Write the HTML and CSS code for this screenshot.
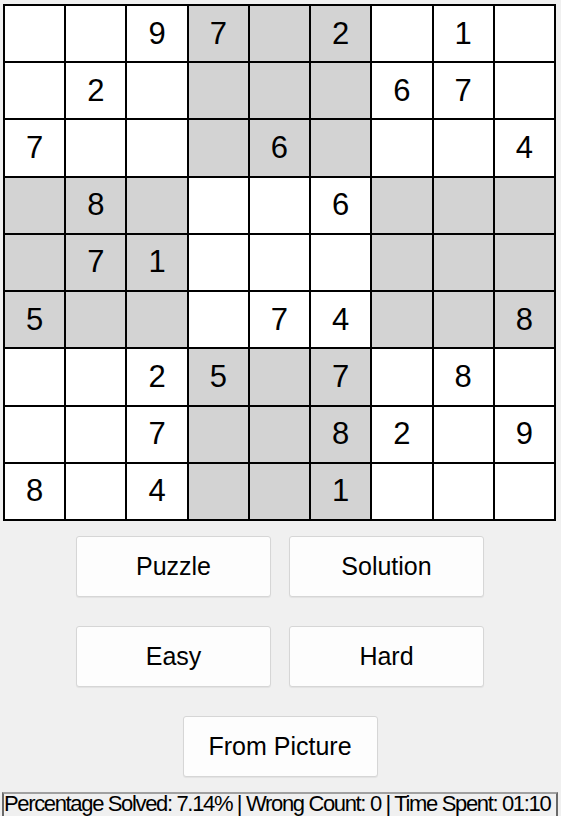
FILE: index.html
```html
<!DOCTYPE html>
<html>
<head>
<meta charset="utf-8">
<link rel="stylesheet" href="styles.css">
</head>
<body>
<div class="board">
  <div class="cell"></div><div class="cell"></div><div class="cell">9</div><div class="cell shade">7</div><div class="cell shade"></div><div class="cell shade">2</div><div class="cell"></div><div class="cell">1</div><div class="cell"></div>
  <div class="cell"></div><div class="cell">2</div><div class="cell"></div><div class="cell shade"></div><div class="cell shade"></div><div class="cell shade"></div><div class="cell">6</div><div class="cell">7</div><div class="cell"></div>
  <div class="cell">7</div><div class="cell"></div><div class="cell"></div><div class="cell shade"></div><div class="cell shade">6</div><div class="cell shade"></div><div class="cell"></div><div class="cell"></div><div class="cell">4</div>
  <div class="cell shade"></div><div class="cell shade">8</div><div class="cell shade"></div><div class="cell"></div><div class="cell"></div><div class="cell">6</div><div class="cell shade"></div><div class="cell shade"></div><div class="cell shade"></div>
  <div class="cell shade"></div><div class="cell shade">7</div><div class="cell shade">1</div><div class="cell"></div><div class="cell"></div><div class="cell"></div><div class="cell shade"></div><div class="cell shade"></div><div class="cell shade"></div>
  <div class="cell shade">5</div><div class="cell shade"></div><div class="cell shade"></div><div class="cell"></div><div class="cell">7</div><div class="cell">4</div><div class="cell shade"></div><div class="cell shade"></div><div class="cell shade">8</div>
  <div class="cell"></div><div class="cell"></div><div class="cell">2</div><div class="cell shade">5</div><div class="cell shade"></div><div class="cell shade">7</div><div class="cell"></div><div class="cell">8</div><div class="cell"></div>
  <div class="cell"></div><div class="cell"></div><div class="cell">7</div><div class="cell shade"></div><div class="cell shade"></div><div class="cell shade">8</div><div class="cell">2</div><div class="cell"></div><div class="cell">9</div>
  <div class="cell">8</div><div class="cell"></div><div class="cell">4</div><div class="cell shade"></div><div class="cell shade"></div><div class="cell shade">1</div><div class="cell"></div><div class="cell"></div><div class="cell"></div>
</div>
<div class="controls">
  <div class="row">
    <button class="btn">Puzzle</button>
    <button class="btn">Solution</button>
  </div>
  <div class="row">
    <button class="btn">Easy</button>
    <button class="btn">Hard</button>
  </div>
  <div class="row">
    <button class="btn">From Picture</button>
  </div>
</div>
<div class="status">Percentage Solved: 7.14% | Wrong Count: 0 | Time Spent: 01:10</div>
</body>
</html>
```
FILE: styles.css
```css
html, body {
  margin: 0;
  padding: 0;
  background: #f0f0f0;
  font-family: "Liberation Sans", Arial, sans-serif;
  overflow: hidden;
}
body {
  width: 561px;
  height: 816px;
}
.board {
  margin: 4px 0 0 3px;
  width: 553px;
  height: 517px;
  box-sizing: border-box;
  background: #000;
  padding: 2px;
  display: grid;
  grid-template-columns: repeat(9, 1fr);
  grid-template-rows: repeat(9, 1fr);
  gap: 2px;
}
.cell {
  background: #fff;
  display: flex;
  align-items: center;
  justify-content: center;
  font-size: 31px;
  color: #000;
}
.cell.shade {
  background: #d3d3d3;
}
.controls {
  display: flex;
  flex-direction: column;
  gap: 29px;
  margin: 15px 1px 0 0;
  align-items: center;
}
.row {
  display: flex;
  gap: 18px;
  justify-content: center;
}
.btn {
  box-sizing: border-box;
  width: 195px;
  height: 61px;
  background: #fdfdfd;
  border: 1px solid #d6d6d6;
  border-radius: 3px;
  font-family: "Liberation Sans", Arial, sans-serif;
  font-size: 25px;
  color: #000;
  padding: 0;
  box-shadow: 0 1px 1px rgba(0,0,0,0.06);
}
.status {
  margin: 15px 3px 0 2px;
  height: 26px;
  box-sizing: border-box;
  border-top: 2px solid #a0a0a0;
  border-left: 2px solid #696969;
  border-right: 2px solid #696969;
  font-size: 22px;
  line-height: 20px;
  white-space: nowrap;
  overflow: hidden;
  color: #000;
  letter-spacing: -1.35px;
}
```
